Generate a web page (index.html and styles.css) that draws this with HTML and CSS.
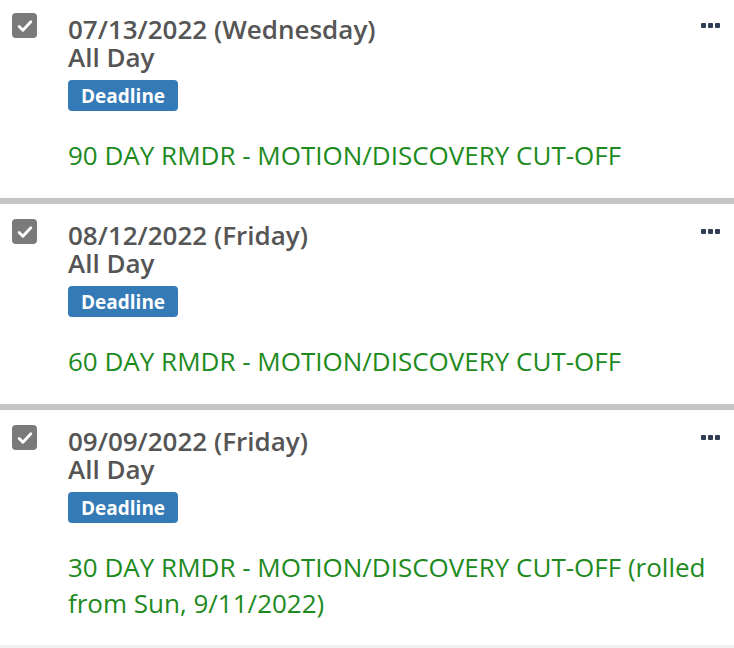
FILE: index.html
```html
<!DOCTYPE html>
<html>
<head>
<meta charset="utf-8">
<link rel="stylesheet" href="styles.css">
</head>
<body>
<div class="list">
  <div class="item">
    <span class="check"><svg viewBox="0 0 24 24" width="20" height="20"><path d="M5 12.5l4.5 4.5 9.5-10" fill="none" stroke="#fff" stroke-width="3.4" stroke-linecap="round" stroke-linejoin="round"/></svg></span>
    <div class="body">
      <div class="date">07/13/2022 (Wednesday)</div>
      <div class="time">All Day</div>
      <span class="badge">Deadline</span>
      <div class="title">90 DAY RMDR - MOTION/DISCOVERY CUT-OFF</div>
    </div>
    <span class="more"><i></i><i></i><i></i></span>
  </div>
  <div class="item">
    <span class="check"><svg viewBox="0 0 24 24" width="20" height="20"><path d="M5 12.5l4.5 4.5 9.5-10" fill="none" stroke="#fff" stroke-width="3.4" stroke-linecap="round" stroke-linejoin="round"/></svg></span>
    <div class="body">
      <div class="date">08/12/2022 (Friday)</div>
      <div class="time">All Day</div>
      <span class="badge">Deadline</span>
      <div class="title">60 DAY RMDR - MOTION/DISCOVERY CUT-OFF</div>
    </div>
    <span class="more"><i></i><i></i><i></i></span>
  </div>
  <div class="item last">
    <span class="check"><svg viewBox="0 0 24 24" width="20" height="20"><path d="M5 12.5l4.5 4.5 9.5-10" fill="none" stroke="#fff" stroke-width="3.4" stroke-linecap="round" stroke-linejoin="round"/></svg></span>
    <div class="body">
      <div class="date">09/09/2022 (Friday)</div>
      <div class="time">All Day</div>
      <span class="badge">Deadline</span>
      <div class="title">30 DAY RMDR - MOTION/DISCOVERY CUT-OFF (rolled from Sun, 9/11/2022)</div>
    </div>
    <span class="more"><i></i><i></i><i></i></span>
  </div>
</div>
</body>
</html>
```
FILE: styles.css
```css
html, body {
  margin: 0;
  padding: 0;
  background: #fff;
}
body {
  font-family: "Open Sans", "Noto Sans", sans-serif;
  overflow: hidden;
}
.list {
  margin-top: -2px;
}
.item {
  position: relative;
  display: flex;
  align-items: flex-start;
  padding: 17px 10px 25px 12px;
  border-bottom: 6px solid #c4c4c4;
  height: 158px;
}
.item.last {
  border-bottom: 3px solid #eef2f1;
  height: 193px;
}
.check {
  flex: none;
  width: 25px;
  height: 25px;
  margin-top: -2px;
  border-radius: 4px;
  background: #7a7a7a;
  display: flex;
  align-items: center;
  justify-content: center;
}
.body {
  flex: 1;
  margin-left: 31px;
  color: #555;
}
.date, .time {
  font-size: 26px;
  font-weight: 600;
  line-height: 28px;
}
.badge {
  display: inline-block;
  box-sizing: border-box;
  margin-top: 9px;
  background: #337ab7;
  color: #fff;
  font-weight: 700;
  font-size: 19px;
  line-height: 30px;
  height: 31px;
  padding: 1px 13px 0;
  border-radius: 4px;
  vertical-align: top;
}
.title {
  margin-top: 26px;
  color: #1d8a1d;
  font-size: 26px;
  line-height: 36px;
}
.more {
  position: absolute;
  top: 25px;
  right: 14px;
  display: flex;
  gap: 2px;
}
.more i {
  width: 5px;
  height: 5px;
  border-radius: 1px;
  background: #2f3d55;
}
```
